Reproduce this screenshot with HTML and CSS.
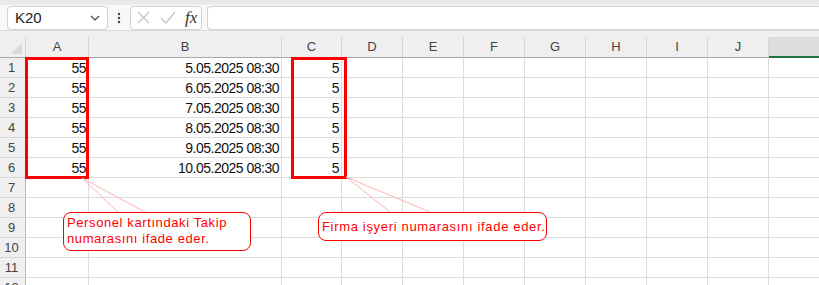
FILE: index.html
```html
<!DOCTYPE html>
<html lang="tr">
<head>
  <meta charset="UTF-8">
  <meta name="viewport" content="width=device-width,initial-scale=1.0">
  <title>Sayfa1</title>
  <link rel="stylesheet" href="styles.css">
</head>
<body>

<!-- Formula bar -->
<div class="formula-bar">
  <div class="namebox">
    <span>K20</span>
    <svg width="10" height="6" viewBox="0 0 10 6"><polyline points="1,1 5,5 9,1" fill="none" stroke="#444" stroke-width="1.2"/></svg>
  </div>
  <div class="dots">
    <svg width="4" height="12" viewBox="0 0 4 12"><circle cx="2" cy="2" r="1.2" fill="#444"/><circle cx="2" cy="6" r="1.2" fill="#444"/><circle cx="2" cy="10" r="1.2" fill="#444"/></svg>
  </div>
  <div class="fx-box">
    <svg width="13" height="13" viewBox="0 0 13 13"><path d="M1 1 L12 12 M12 1 L1 12" stroke="#c4c4c4" stroke-width="1.2" fill="none"/></svg>
    <svg width="16" height="13" viewBox="0 0 16 13"><path d="M1 7 L6 12 L15 1" stroke="#c4c4c4" stroke-width="1.2" fill="none"/></svg>
    <span class="fx">fx</span>
  </div>
  <div class="formula-input"></div>
</div>

<!-- Sheet -->
<div class="sheet">
  <div class="grid" id="grid"></div>

  <div class="mark mark-a"></div>
  <div class="mark mark-c"></div>

  <svg class="pointers" width="819" height="254">
    <line x1="82" y1="147" x2="118" y2="181"/>
    <line x1="82" y1="147" x2="145" y2="181"/>
    <line x1="346" y1="146" x2="390" y2="181"/>
    <line x1="346" y1="146" x2="430" y2="181"/>
  </svg>

  <div class="note note-1">Personel kartındaki Takip<br>numarasını ifade eder.</div>
  <div class="note note-2">Firma işyeri numarasını ifade eder.</div>
</div>

<script>
const cols = ['A','B','C','D','E','F','G','H','I','J','K'];
const data = {
  1: ['55', '5.05.2025 08:30', '5'],
  2: ['55', '6.05.2025 08:30', '5'],
  3: ['55', '7.05.2025 08:30', '5'],
  4: ['55', '8.05.2025 08:30', '5'],
  5: ['55', '9.05.2025 08:30', '5'],
  6: ['55', '10.05.2025 08:30', '5']
};

let html = '<div class="corner"></div>';
cols.forEach(c => {
  html += `<div class="colhead${c === 'K' ? ' selected' : ''}">${c === 'K' ? '' : c}</div>`;
});
for (let r = 1; r <= 12; r++) {
  html += `<div class="rowhead">${r}</div>`;
  cols.forEach((c, i) => {
    let v = (data[r] && data[r][i]) || '';
    html += `<div class="cell">${v}</div>`;
  });
}
document.getElementById('grid').innerHTML = html;
</script>

</body>
</html>
```

FILE: styles.css
```css
body { margin:0; overflow:hidden; height:285px; background:#fff; font-family:"Liberation Sans", Arial, sans-serif; }

/* Formula bar */
.formula-bar { display:flex; align-items:center; height:31px; box-sizing:border-box;
  padding:6px 0 1px 7px; background:linear-gradient(#e7e7e7 0, #ececec 5px, #f8f8f8 5px);
  border-bottom:1px solid #dcdcdc; }
.namebox { width:101px; height:24px; box-sizing:border-box; border:1px solid #d2d2d2; border-radius:4px;
  background:#fff; display:flex; align-items:center; justify-content:space-between; padding:0 7px 0 7px;
  font-size:15px; color:#222; }
.dots { width:22px; display:flex; justify-content:center; align-items:center; }
.fx-box { width:72px; height:24px; box-sizing:border-box; border:1px solid #d2d2d2; border-radius:4px;
  background:#fff; display:flex; align-items:center; gap:10px; padding:0 0 0 6px; }
.fx { font-family:"Liberation Serif", serif; font-style:italic; font-size:17px; color:#333; margin-left:-1px; }
.formula-input { flex:1; height:24px; margin-left:5px; box-sizing:border-box; border:1px solid #d2d2d2;
  border-right:none; border-radius:4px 0 0 4px; background:#fff; }

/* Sheet */
.sheet { position:relative; padding-top:6px; background:#efefef; height:254px; box-sizing:border-box; overflow:hidden; }
.grid { display:grid; grid-template-columns:26px 63px 193px 60px repeat(8, 61px); grid-auto-rows:20px;
  grid-template-rows:21px; background:#fff; width:830px; }

.corner { position:relative; background:#efefef; border-right:1px solid #d4d4d4; border-bottom:1px solid #a8a8a8; }
.corner::after { content:""; position:absolute; right:3px; bottom:3px; width:0; height:0;
  border-left:11px solid transparent; border-bottom:11px solid #dadada; }

.colhead { background:#efefef; border-right:1px solid #d6d6d6; border-bottom:1px solid #a8a8a8;
  font-size:13px; color:#444; text-align:center; line-height:20px; box-sizing:border-box; }
.colhead.selected { background:#dcdcdc; border-bottom:2px solid #217346; border-right:none; }

.rowhead { background:#efefef; border-right:1px solid #bcbcbc; border-bottom:1px solid #d6d6d6;
  font-size:13px; color:#444; text-align:center; line-height:20px; box-sizing:border-box; padding-right:2px; }

.cell { border-right:1px solid #dcdcdc; border-bottom:1px solid #dcdcdc; box-sizing:border-box;
  text-align:right; padding-right:2px; font-size:14px; line-height:21px; color:#111; letter-spacing:-0.5px;
  white-space:nowrap; overflow:hidden; }

/* Drawn shapes */
.mark { position:absolute; top:26px; border:3px solid #f00; box-sizing:border-box; }
.mark-a { left:25px; width:64px; height:122px; }
.mark-c { left:291px; width:56px; height:122px; }

.pointers { position:absolute; left:0; top:0; }
.pointers line { stroke:#ffb4b4; stroke-width:1; }

.note { position:absolute; top:181px; border:1px solid #f00; border-radius:8px; background:#fff;
  box-sizing:border-box; color:#f00; font-size:13px; letter-spacing:0.6px; padding:2px 3px; white-space:nowrap; }
.note-1 { left:63px; width:188px; height:39px; line-height:15.5px; }
.note-2 { left:318px; width:229px; height:29px; line-height:23px; letter-spacing:0.67px; }
```
